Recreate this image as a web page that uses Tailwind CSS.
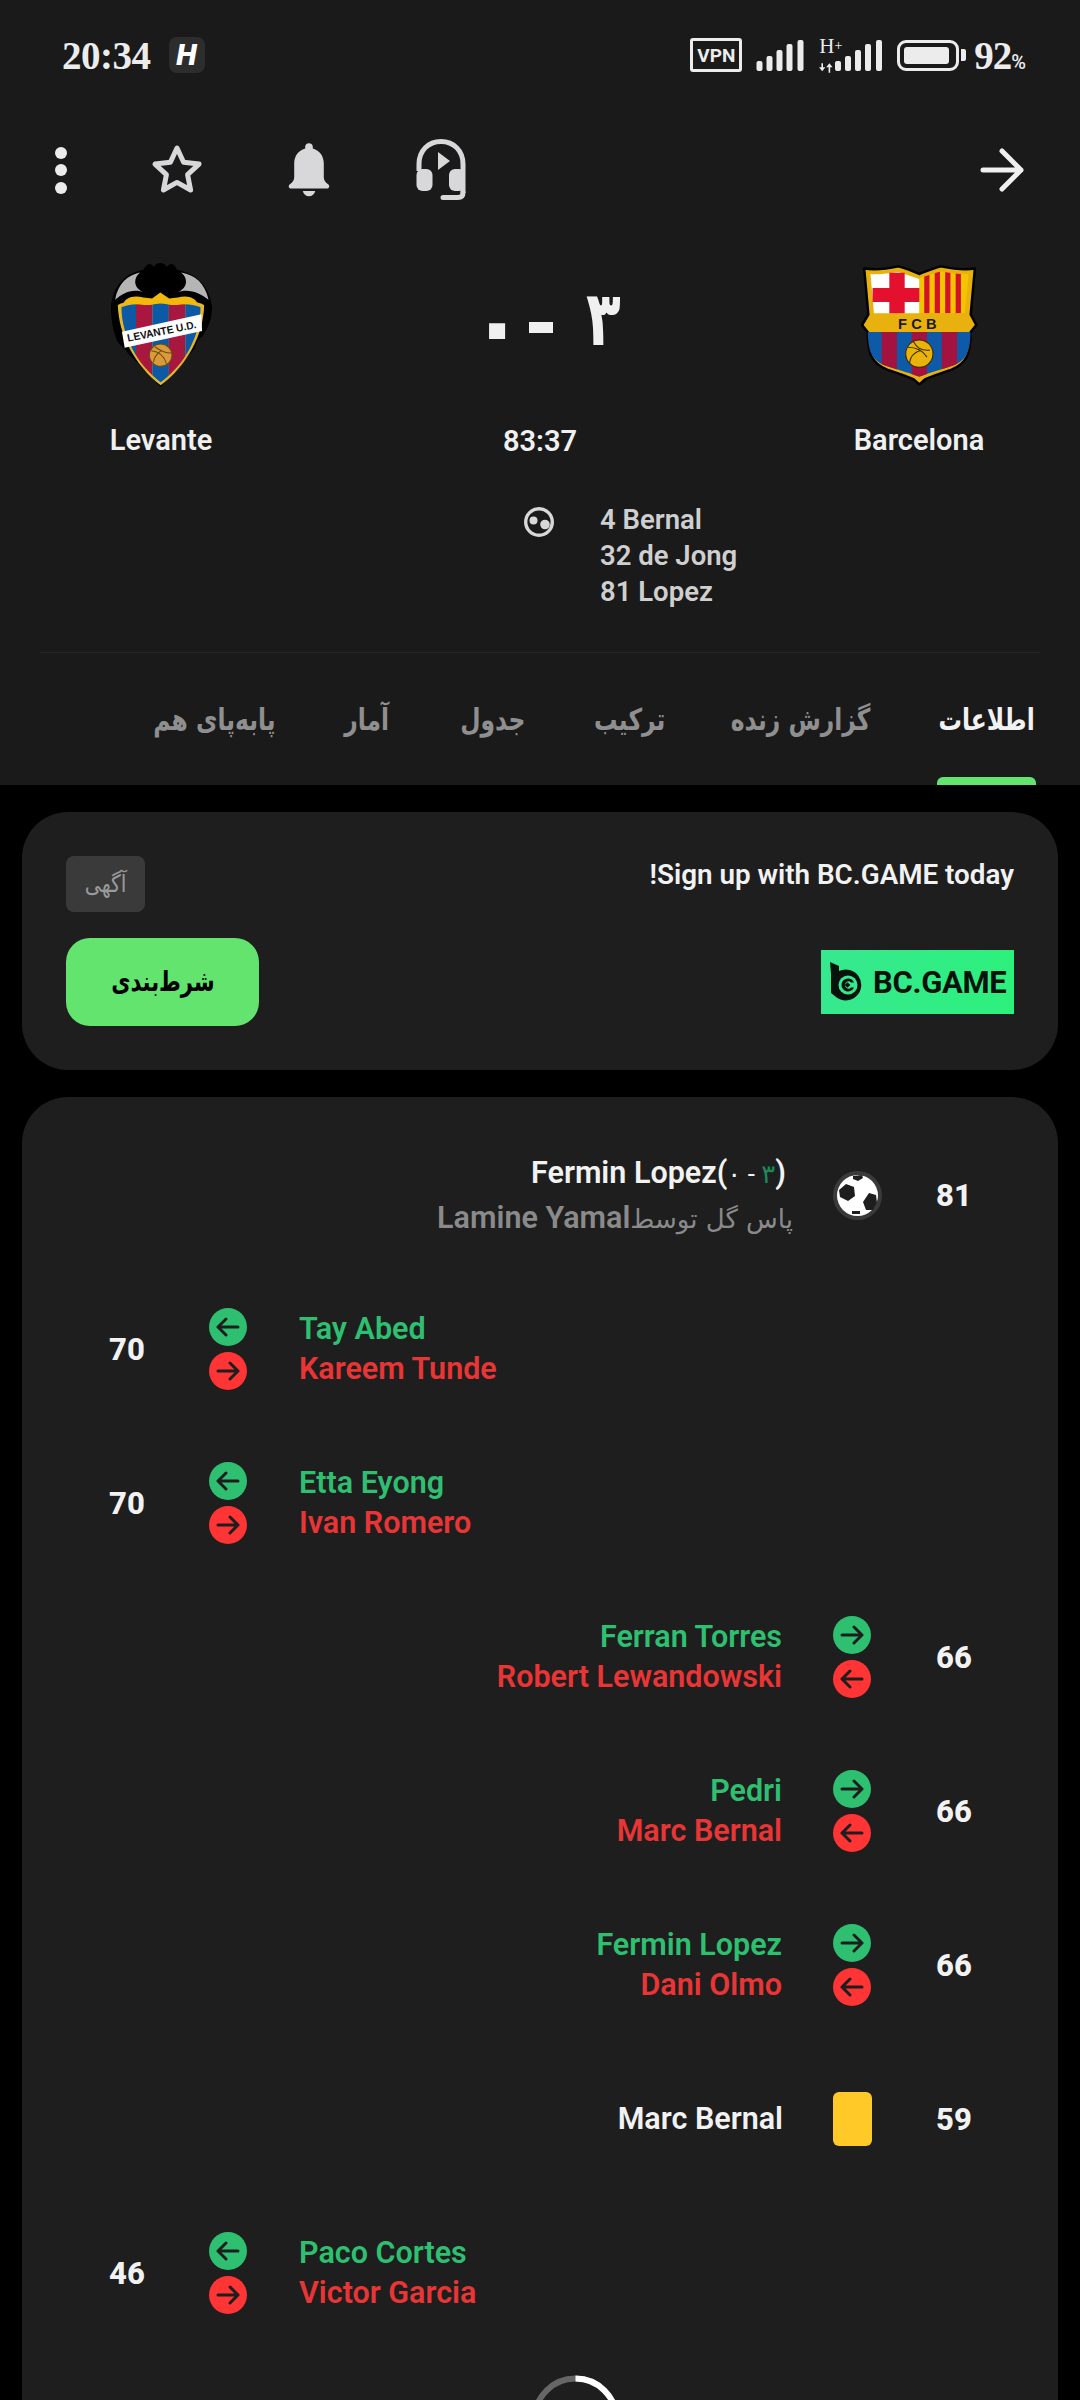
<!DOCTYPE html>
<html lang="fa">
<head>
<meta charset="UTF-8">
<title>Barcelona - Levante</title>
<script src="https://cdn.jsdelivr.net/npm/@tailwindcss/browser@4"></script>
</head>
<body class="bg-black">
<div class="w-[1080px] h-[2400px] overflow-hidden bg-black font-['Roboto','DejaVu_Sans',sans-serif]">

  <!-- match header -->
  <header class="h-[785px] bg-[#1a1a1a] flex flex-col">
    <!-- status bar -->
    <div class="h-[110px] pl-[62px] pr-[55px] flex items-center justify-between text-[#ececec]">
      <div class="flex items-center gap-[18px]">
        <span class="font-['Liberation_Serif',serif] font-bold text-[39px] leading-none tracking-[-0.5px]">20:34</span>
        <span class="w-[36px] h-[36px] rounded-[8px] bg-[#2d2d2d] flex items-center justify-center text-white italic font-black text-[30px] leading-none">H</span>
      </div>
      <div class="flex items-center">
        <span class="w-[52px] h-[34px] border-[3px] border-[#ececec] rounded-[3px] flex items-center justify-center text-[19px] font-bold leading-none">VPN</span>
        <svg class="ml-[14px]" width="48" height="32" viewBox="0 0 47 32" fill="#ececec">
          <rect x="0" y="22" width="6" height="10" rx="2"/><rect x="10" y="17" width="6" height="15" rx="2"/><rect x="20" y="11" width="6" height="21" rx="2"/><rect x="30" y="5" width="6" height="27" rx="2"/><rect x="41" y="1" width="6" height="31" rx="2"/>
        </svg>
        <div class="ml-[15px] w-[16px] h-[38px] flex flex-col justify-between items-start">
          <span class="font-['Liberation_Serif',serif] text-[21px] leading-[20px] whitespace-nowrap">H<span class="text-[14px] align-top">+</span></span>
          <svg width="16" height="12" viewBox="0 0 20 12" fill="#ececec"><path d="M0 5h3V0h2v5h3l-4 5zM12 12V5H9l4-5 4 5h-3v7z"/></svg>
        </div>
        <svg width="47" height="32" viewBox="0 0 47 32" fill="#ececec">
          <rect x="0" y="22" width="6" height="10" rx="2"/><rect x="10" y="17" width="6" height="15" rx="2"/><rect x="20" y="11" width="6" height="21" rx="2"/><rect x="30" y="5" width="6" height="27" rx="2"/><rect x="41" y="1" width="6" height="31" rx="2"/>
        </svg>
        <div class="ml-[15px] w-[62px] h-[31px] rounded-[9px] border-[3px] border-[#ececec] p-[4px]">
          <div class="w-[45px] h-full rounded-[3px] bg-[#ececec]"></div>
        </div>
        <span class="ml-[2px] w-[5px] h-[12px] rounded-r-[2px] bg-[#ececec]"></span>
        <span class="ml-[8px] font-['Liberation_Serif',serif] font-bold text-[39px] leading-none tracking-[-1px]">92<span class="font-['Roboto'] font-medium text-[20px]">%</span></span>
      </div>
    </div>

    <!-- toolbar -->
    <div class="h-[120px] pl-[55px] pr-[56px] flex items-center justify-between">
      <div class="flex items-center">
        <div class="w-[12px] flex flex-col gap-[5.500px]">
          <span class="w-[12px] h-[12px] rounded-full bg-[#ececec]"></span>
          <span class="w-[12px] h-[12px] rounded-full bg-[#ececec]"></span>
          <span class="w-[12px] h-[12px] rounded-full bg-[#ececec]"></span>
        </div>
        <svg class="ml-[84px]" width="52" height="52" viewBox="0 0 52 52" fill="none" stroke="#d8d8da" stroke-width="5" stroke-linejoin="round">
          <path d="M26 4l6.6 14.2 15.4 1.9-11.4 10.6 3 15.3L26 38.4 12.4 46l3-15.3L4 20.100l15.400-1.900z"/>
        </svg>
        <svg class="ml-[85px]" width="42" height="56" viewBox="0 0 44 56" fill="#d8d8da">
          <path d="M22 0c2.500 0 4 1.600 4 3.700v1.700c7.400 2 11.500 8.300 11.500 15.600v14.500c0 3 1.500 5 4.500 7.500 2 1.600 1.500 4.500-1.200 4.500H3.200C.5 47.500 0 44.600 2 43c3-2.500 4.500-4.500 4.500-7.500V21C6.500 13.700 10.600 7.400 18 5.400V3.700C18 1.600 19.500 0 22 0z"/>
          <path d="M15.500 50h13c-.8 3.400-3.300 5.500-6.500 5.500s-5.700-2.100-6.500-5.500z"/>
        </svg>
        <svg class="ml-[86px]" width="50" height="62" viewBox="0 0 50 62" fill="none">
          <path d="M3 32V25C3 12 12 2.500 25 2.500S47 12 47 25v29" stroke="#d8d8da" stroke-width="5"/>
          <rect x="0.500" y="30" width="16" height="22" rx="6" fill="#d8d8da"/>
          <rect x="33" y="30" width="16" height="22" rx="6" fill="#d8d8da"/>
          <path d="M22 13l12 9-12 9z" fill="#d8d8da"/>
          <path d="M27 58.500h15c3 0 5-1.500 5-5" stroke="#d8d8da" stroke-width="5" stroke-linecap="round"/>
        </svg>
      </div>
      <svg width="44" height="44" viewBox="0 0 44 44" fill="none" stroke="#f0f0f0" stroke-width="5" stroke-linecap="round" stroke-linejoin="round">
        <path d="M3 22h38M22 3l19 19-19 19"/>
      </svg>
    </div>

    <!-- teams and score -->
    <div class="px-[41px] grid grid-cols-[240px_1fr_240px]">
      <div class="flex flex-col items-center pt-[33px]">
        <svg width="101" height="124" viewBox="0 0 295 370" preserveAspectRatio="none">
          <path d="M0 130C5 70 40 30 95 20c10-20 20-22 30-8 8-16 30-16 38 0 10-14 22-12 30 8 55 10 95 50 102 110 2 50-25 80-28 90-15 10-15 10-22 35L145 370 50 270c-10-20-25-20-35-45C5 195 0 170 0 130z" fill="#000"/>
          <path d="M12 110C20 60 50 35 85 28 60 50 70 80 100 88 60 75 35 90 12 110zM285 110C275 60 245 35 205 28c25 22 15 52-15 60 40-13 70 2 95 22z" fill="#b5b5b5"/>
          <path d="M20 125c40-22 210-22 252 0-2 90-50 180-127 240C70 305 22 215 20 125z" fill="#e5b82a"/>
          <clipPath id="lvShield"><path d="M30 132c40-18 190-18 232 0-2 85-45 170-117 224C75 302 32 217 30 132z"/></clipPath>
          <g clip-path="url(#lvShield)">
            <rect x="25" y="100" width="48" height="270" fill="#0c5aa6"/>
            <rect x="73" y="100" width="48" height="270" fill="#a8173f"/>
            <rect x="121" y="100" width="48" height="270" fill="#0c5aa6"/>
            <rect x="169" y="100" width="48" height="270" fill="#a8173f"/>
            <rect x="217" y="100" width="48" height="270" fill="#0c5aa6"/>
          </g>
          <path d="M35 125c5-22 30-30 60-22l25 3 24-18 26 18 25-3c30-8 52 0 60 22-30-8-60 3-80 0-20-6-40-6-60 0-20 3-50-8-80 0z" fill="#f0b90b"/>
          <path d="M32 205l232-52 2 50-226 50z" fill="#fff"/>
          <text x="0" y="0" transform="translate(50 235) rotate(-11.500)" font-family="Liberation Sans" font-size="32" font-weight="700" fill="#111" textLength="205" lengthAdjust="spacingAndGlyphs">LEVANTE U.D.</text>
          <circle cx="145" cy="275" r="33" fill="#d99a3a" stroke="#6b4a12" stroke-width="3"/>
          <path d="M118 262c18 2 36 12 44 38M128 250c18 12 30 20 48 18M124 296c2-14 10-26 22-34" fill="none" stroke="#6b4a12" stroke-width="3"/>
        </svg>
        <span class="mt-[33px] text-[29px] leading-[40px] font-semibold text-[#f0f0f0]">Levante</span>
      </div>
      <div class="flex flex-col items-center pt-[33px]">
        <div dir="ltr" class="h-[125px] w-full flex items-center justify-center text-[#f0f0f0] font-['DejaVu_Sans',sans-serif] font-bold">
          <span class="ml-[10px] w-[40px] text-center text-[92px] leading-none">۰</span>
          <span class="ml-[20px] mt-[3px] w-[24px] h-[11px] bg-[#f0f0f0]"></span>
          <span class="ml-[28px] mb-[14px] w-[40px] text-center text-[76px] leading-none scale-x-75">۳</span>
        </div>
        <span class="mt-[33px] text-[29px] leading-[40px] font-semibold text-[#f0f0f0]">83:37</span>
      </div>
      <div class="flex flex-col items-center pt-[33px]">
        <svg width="118" height="124" viewBox="8 0 338 352">
          <path d="M20 14c35 6 70 0 98-6 25 6 42 14 60 22 20-8 38-16 62-22 30 6 65 12 97 6l-12 132 16 30-16 20c0 60-10 90-55 108-28 10-56 18-76 28l-16 14-16-14c-20-10-48-18-76-28-46-18-55-48-56-108L14 176l18-30z" fill="#e8b10e" stroke="#000" stroke-width="7" stroke-linejoin="round"/>
          <path d="M38 30c25 2 55-2 80-6l60 20v98H48z" fill="#fff"/>
          <clipPath id="fcbFlag"><path d="M178 42c20-6 40-14 62-20 25 6 50 8 80 8l-12 112H178z"/></clipPath>
          <g clip-path="url(#fcbFlag)">
            <rect x="178" y="10" width="140" height="140" fill="#f5c400"/>
            <rect x="192" y="10" width="15" height="140" fill="#d3122a"/>
            <rect x="222" y="10" width="15" height="140" fill="#d3122a"/>
            <rect x="252" y="10" width="15" height="140" fill="#d3122a"/>
            <rect x="282" y="10" width="15" height="140" fill="#d3122a"/>
          </g>
          <path d="M92 26h44v44h42v40h-42v32H92v-32H44V70h48z" fill="#e3102e"/>
          <text x="178" y="188" text-anchor="middle" font-family="Liberation Sans" font-size="42" font-weight="700" fill="#1a1a1a" letter-spacing="12">FCB</text>
          <clipPath id="fcbLow"><path d="M30 196h295c-2 55-10 80-50 96-28 10-60 18-97 32-38-14-70-22-98-32-40-16-48-42-50-96z"/></clipPath>
          <g clip-path="url(#fcbLow)">
            <rect x="25" y="190" width="305" height="140" fill="#0d5aa8"/>
            <rect x="70" y="190" width="44" height="140" fill="#a4123f"/>
            <rect x="156" y="190" width="44" height="140" fill="#a4123f"/>
            <rect x="242" y="190" width="44" height="140" fill="#a4123f"/>
          </g>
          <circle cx="178" cy="258" r="39" fill="#eab308" stroke="#3a2a05" stroke-width="3"/>
          <path d="M145 240c22 0 42 8 55 28M160 222c10 18 20 28 48 26M150 285c2-18 12-30 30-36" fill="none" stroke="#3a2a05" stroke-width="3"/>
        </svg>
        <span class="mt-[33px] text-[29px] leading-[40px] font-semibold text-[#f0f0f0]">Barcelona</span>
      </div>
    </div>

    <!-- goal scorers -->
    <div class="mt-[41px] pl-[524px] flex">
      <svg class="mt-[5px]" width="30" height="30" viewBox="0 0 30 30">
        <circle cx="15" cy="15" r="13.300" fill="none" stroke="#d8d8d8" stroke-width="3.400"/>
        <circle cx="9.500" cy="13.500" r="4" fill="#d8d8d8"/><circle cx="21" cy="17.500" r="4.800" fill="#d8d8d8"/>
      </svg>
      <div class="ml-[46px] text-[27.500px] leading-[36px] font-semibold text-[#cfcfcf]">
        <div>4 Bernal</div>
        <div>32 de Jong</div>
        <div>81 Lopez</div>
      </div>
    </div>

    <div class="mt-[42px] mx-[40px] h-px shrink-0 bg-[#242424]"></div>

    <!-- tabs -->
    <nav dir="rtl" class="flex-1 pr-[44px] flex gap-[68px] font-['DejaVu_Sans',sans-serif] font-bold text-[30px] text-[#8f8f8f]">
      <div class="relative w-[99px] flex items-center justify-center whitespace-nowrap text-[#f2f2f2]">
        <span class="scale-x-[0.78]">اطلاعات</span>
        <span class="absolute bottom-0 inset-x-0 h-[8px] rounded-t-[6px] bg-[#62e46f]"></span>
      </div>
      <div class="w-[136px] flex items-center justify-center whitespace-nowrap"><span class="scale-x-[0.78]">گزارش زنده</span></div>
      <div class="w-[70px] flex items-center justify-center whitespace-nowrap"><span class="scale-x-[0.78]">ترکیب</span></div>
      <div class="w-[69px] flex items-center justify-center whitespace-nowrap"><span class="scale-x-[0.78]">جدول</span></div>
      <div class="w-[46px] flex items-center justify-center whitespace-nowrap"><span class="scale-x-[0.78]">آمار</span></div>
      <div class="w-[124px] flex items-center justify-center whitespace-nowrap"><span class="scale-x-[0.78]">پابه‌پای هم</span></div>
    </nav>
  </header>

  <!-- ad card -->
  <section class="mt-[27px] mx-[22px] h-[258px] rounded-[46px] bg-[#1e1e1e] px-[44px] pt-[44px] flex flex-col">
    <div class="flex items-start justify-between h-[56px]">
      <span class="w-[79px] h-[56px] rounded-[8px] bg-[#3a3a3a] flex items-center justify-center text-[#9a9a9a] font-['DejaVu_Sans',sans-serif]"><span class="text-[24px] scale-x-[0.85]">آگهی</span></span>
      <span dir="rtl" class="mt-[1px] text-[27.800px] leading-[36px] font-semibold text-[#f2f2f2]">Sign up with BC.GAME today!</span>
    </div>
    <div class="mt-[26px] flex items-center justify-between">
      <button class="w-[193px] h-[88px] rounded-[24px] bg-[#62e46f] text-black font-bold font-['DejaVu_Sans',sans-serif]"><span class="inline-block text-[28px] scale-x-[0.75]">شرط‌بندی</span></button>
      <div class="w-[193px] h-[64px] bg-gradient-to-r from-[#36e88f] to-[#2cf07c] flex items-center pl-[9px] gap-[9px]">
        <svg width="34" height="40" viewBox="0 0 34 40">
          <path d="M0 0l9 4v5a15.500 15.500 0 1 1-3 26L1 31V12z" fill="#07120c"/>
          <circle cx="18" cy="23" r="9.500" fill="#36e88f"/>
          <path d="M18 16.500a6.500 6.500 0 1 0 6 9h-3a3.500 3.500 0 1 1 0-5h3a6.500 6.500 0 0 0-6-4z" fill="#07120c"/>
          <rect x="15.500" y="21" width="4" height="4" fill="#07120c" transform="rotate(45 17.500 23)"/>
        </svg>
        <span class="font-bold text-[31px] leading-none text-[#07120c] tracking-[-0.3px] whitespace-nowrap">BC.GAME</span>
      </div>
    </div>
  </section>

  <!-- match events -->
  <section class="mt-[27px] mx-[22px] h-[1400px] rounded-t-[46px] bg-[#1e1e1e] pt-[21px] flex flex-col text-[30.500px] font-semibold">
    <div class="h-[154px] shrink-0 flex items-center justify-end pr-[74px]">
      <div class="flex flex-col items-end pt-[2px]">
        <div class="leading-[44px] mr-[7px] text-[#f2f2f2]" dir="ltr">Fermin Lopez(<span class="text-[26px] font-normal">۰ - <span class="text-[#1b8a5a]">۳</span></span>)</div>
        <div class="leading-[44px] text-[#8a8a8a]" dir="rtl"><span class="font-['DejaVu_Sans',sans-serif] font-normal text-[26px]">پاس گل توسط</span>Lamine Yamal</div>
      </div>
      <svg class="ml-[40px] mr-[42px] shrink-0" width="49" height="49" viewBox="0 0 49 49">
        <circle cx="24.500" cy="24.500" r="24.500" fill="#3a3a3a"/>
        <circle cx="24.500" cy="24.500" r="20.500" fill="#fff"/>
        <path d="M13 13l8 3 1 9-7 5-8-4-1-7zM36 22l7 2 1 8-4 7-7 0-3-8zM20 5l9-1 1 3-5 3-5-2zM19 40l8 0 0 3-8 0z" fill="#1e1e1e"/>
      </svg>
      <span class="w-[60px] pt-[2px] text-center text-[31px] font-extrabold text-[#f2f2f2]">81</span>
    </div>

    <div class="h-[154px] shrink-0 flex items-center pl-[75px]">
      <span class="w-[60px] pt-[2px] text-center text-[31px] font-extrabold text-[#f2f2f2]">70</span>
      <div class="ml-[51px] w-[40px] flex flex-col items-center gap-[6px]">
        <span class="w-[38px] h-[38px] rounded-full bg-[#2fbf71] flex items-center justify-center"><svg width="24" height="20" viewBox="0 0 24 20" fill="none" stroke="#1e1e1e" stroke-width="3" stroke-linecap="round" stroke-linejoin="round"><path d="M22 10H2M10 2l-8 8 8 8"/></svg></span>
        <span class="w-[38px] h-[38px] rounded-full bg-[#ff3434] flex items-center justify-center"><svg width="24" height="20" viewBox="0 0 24 20" fill="none" stroke="#1e1e1e" stroke-width="3" stroke-linecap="round" stroke-linejoin="round"><path d="M2 10h20M14 2l8 8-8 8"/></svg></span>
      </div>
      <div class="ml-[51px] leading-[40px]">
        <div class="text-[#2fbf71]">Tay Abed</div>
        <div class="text-[#e83535]">Kareem Tunde</div>
      </div>
    </div>

    <div class="h-[154px] shrink-0 flex items-center pl-[75px]">
      <span class="w-[60px] pt-[2px] text-center text-[31px] font-extrabold text-[#f2f2f2]">70</span>
      <div class="ml-[51px] w-[40px] flex flex-col items-center gap-[6px]">
        <span class="w-[38px] h-[38px] rounded-full bg-[#2fbf71] flex items-center justify-center"><svg width="24" height="20" viewBox="0 0 24 20" fill="none" stroke="#1e1e1e" stroke-width="3" stroke-linecap="round" stroke-linejoin="round"><path d="M22 10H2M10 2l-8 8 8 8"/></svg></span>
        <span class="w-[38px] h-[38px] rounded-full bg-[#ff3434] flex items-center justify-center"><svg width="24" height="20" viewBox="0 0 24 20" fill="none" stroke="#1e1e1e" stroke-width="3" stroke-linecap="round" stroke-linejoin="round"><path d="M2 10h20M14 2l8 8-8 8"/></svg></span>
      </div>
      <div class="ml-[51px] leading-[40px]">
        <div class="text-[#2fbf71]">Etta Eyong</div>
        <div class="text-[#e83535]">Ivan Romero</div>
      </div>
    </div>

    <div class="h-[154px] shrink-0 flex items-center justify-end pr-[74px]">
      <div class="text-right leading-[40px]">
        <div class="text-[#2fbf71]">Ferran Torres</div>
        <div class="text-[#e83535]">Robert Lewandowski</div>
      </div>
      <div class="ml-[50px] w-[40px] flex flex-col items-center gap-[6px]">
        <span class="w-[38px] h-[38px] rounded-full bg-[#2fbf71] flex items-center justify-center"><svg width="24" height="20" viewBox="0 0 24 20" fill="none" stroke="#1e1e1e" stroke-width="3" stroke-linecap="round" stroke-linejoin="round"><path d="M2 10h20M14 2l8 8-8 8"/></svg></span>
        <span class="w-[38px] h-[38px] rounded-full bg-[#ff3434] flex items-center justify-center"><svg width="24" height="20" viewBox="0 0 24 20" fill="none" stroke="#1e1e1e" stroke-width="3" stroke-linecap="round" stroke-linejoin="round"><path d="M22 10H2M10 2l-8 8 8 8"/></svg></span>
      </div>
      <span class="ml-[52px] w-[60px] pt-[2px] text-center text-[31px] font-extrabold text-[#f2f2f2]">66</span>
    </div>

    <div class="h-[154px] shrink-0 flex items-center justify-end pr-[74px]">
      <div class="text-right leading-[40px]">
        <div class="text-[#2fbf71]">Pedri</div>
        <div class="text-[#e83535]">Marc Bernal</div>
      </div>
      <div class="ml-[50px] w-[40px] flex flex-col items-center gap-[6px]">
        <span class="w-[38px] h-[38px] rounded-full bg-[#2fbf71] flex items-center justify-center"><svg width="24" height="20" viewBox="0 0 24 20" fill="none" stroke="#1e1e1e" stroke-width="3" stroke-linecap="round" stroke-linejoin="round"><path d="M2 10h20M14 2l8 8-8 8"/></svg></span>
        <span class="w-[38px] h-[38px] rounded-full bg-[#ff3434] flex items-center justify-center"><svg width="24" height="20" viewBox="0 0 24 20" fill="none" stroke="#1e1e1e" stroke-width="3" stroke-linecap="round" stroke-linejoin="round"><path d="M22 10H2M10 2l-8 8 8 8"/></svg></span>
      </div>
      <span class="ml-[52px] w-[60px] pt-[2px] text-center text-[31px] font-extrabold text-[#f2f2f2]">66</span>
    </div>

    <div class="h-[154px] shrink-0 flex items-center justify-end pr-[74px]">
      <div class="text-right leading-[40px]">
        <div class="text-[#2fbf71]">Fermin Lopez</div>
        <div class="text-[#e83535]">Dani Olmo</div>
      </div>
      <div class="ml-[50px] w-[40px] flex flex-col items-center gap-[6px]">
        <span class="w-[38px] h-[38px] rounded-full bg-[#2fbf71] flex items-center justify-center"><svg width="24" height="20" viewBox="0 0 24 20" fill="none" stroke="#1e1e1e" stroke-width="3" stroke-linecap="round" stroke-linejoin="round"><path d="M2 10h20M14 2l8 8-8 8"/></svg></span>
        <span class="w-[38px] h-[38px] rounded-full bg-[#ff3434] flex items-center justify-center"><svg width="24" height="20" viewBox="0 0 24 20" fill="none" stroke="#1e1e1e" stroke-width="3" stroke-linecap="round" stroke-linejoin="round"><path d="M22 10H2M10 2l-8 8 8 8"/></svg></span>
      </div>
      <span class="ml-[52px] w-[60px] pt-[2px] text-center text-[31px] font-extrabold text-[#f2f2f2]">66</span>
    </div>

    <div class="h-[154px] shrink-0 flex items-center justify-end pr-[74px]">
      <span class="text-[#f2f2f2]">Marc Bernal</span>
      <span class="ml-[50px] w-[39px] h-[54px] rounded-[6px] bg-[#ffca28]"></span>
      <span class="ml-[52px] w-[60px] pt-[2px] text-center text-[31px] font-extrabold text-[#f2f2f2]">59</span>
    </div>

    <div class="h-[154px] shrink-0 flex items-center pl-[75px]">
      <span class="w-[60px] pt-[2px] text-center text-[31px] font-extrabold text-[#f2f2f2]">46</span>
      <div class="ml-[51px] w-[40px] flex flex-col items-center gap-[6px]">
        <span class="w-[38px] h-[38px] rounded-full bg-[#2fbf71] flex items-center justify-center"><svg width="24" height="20" viewBox="0 0 24 20" fill="none" stroke="#1e1e1e" stroke-width="3" stroke-linecap="round" stroke-linejoin="round"><path d="M22 10H2M10 2l-8 8 8 8"/></svg></span>
        <span class="w-[38px] h-[38px] rounded-full bg-[#ff3434] flex items-center justify-center"><svg width="24" height="20" viewBox="0 0 24 20" fill="none" stroke="#1e1e1e" stroke-width="3" stroke-linecap="round" stroke-linejoin="round"><path d="M2 10h20M14 2l8 8-8 8"/></svg></span>
      </div>
      <div class="ml-[51px] leading-[40px]">
        <div class="text-[#2fbf71]">Paco Cortes</div>
        <div class="text-[#e83535]">Victor Garcia</div>
      </div>
    </div>

    <!-- loading spinner, cut by the bottom of the window -->
    <svg class="mt-[25px] ml-[509px] shrink-0" width="89" height="89" viewBox="0 0 89 89" fill="none" stroke-width="6">
      <circle cx="44.500" cy="44.500" r="41" stroke="#666"/>
      <path d="M44.500 3.500A41 41 0 0 1 85.500 44.500" stroke="#fff"/>
    </svg>
  </section>
</div>
</body>
</html>
